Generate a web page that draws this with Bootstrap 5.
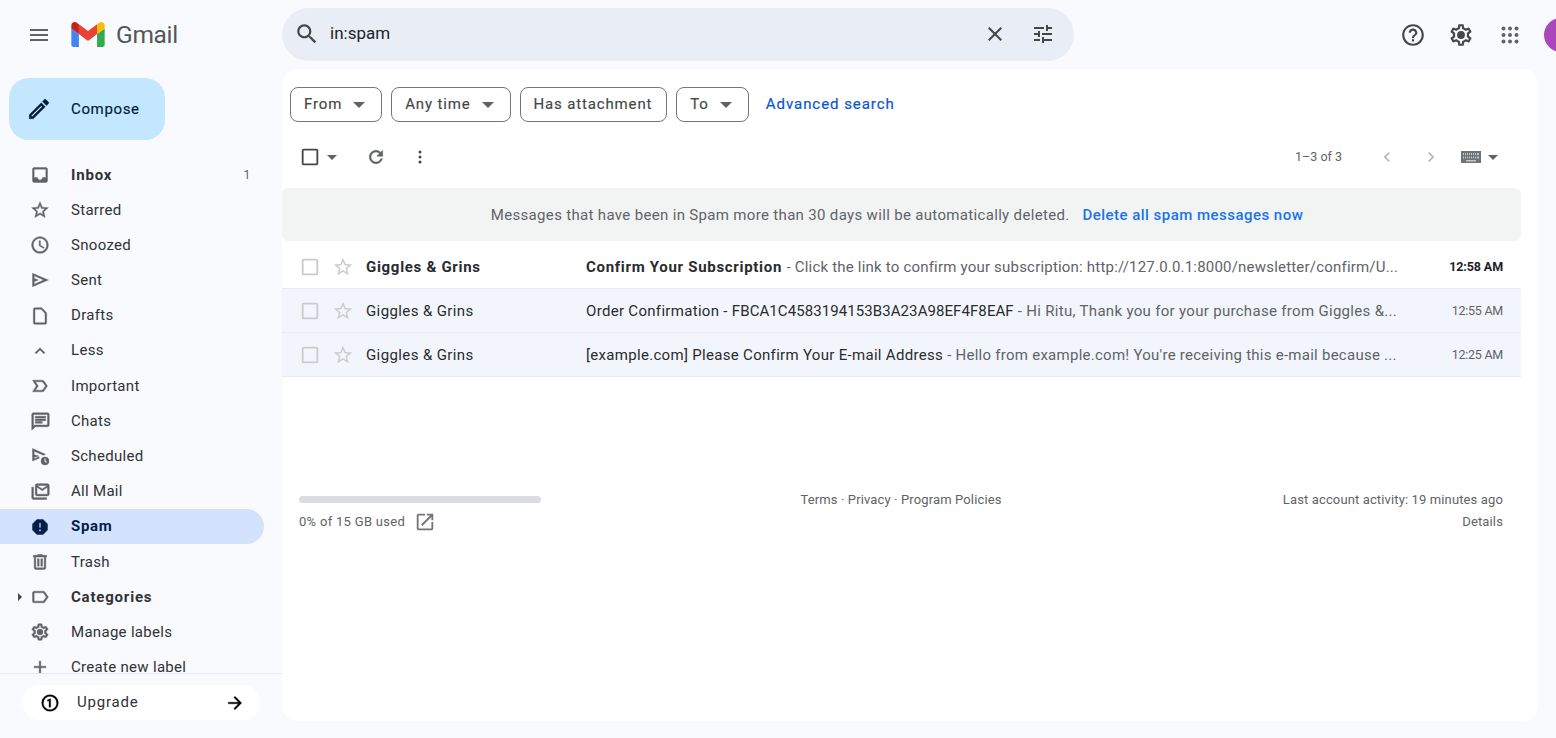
<!DOCTYPE html>
<html lang="en">
<head>
<meta charset="utf-8">
<title>Spam - Gmail</title>
<link href="https://cdn.jsdelivr.net/npm/bootstrap@5.3.0/dist/css/bootstrap.min.css" rel="stylesheet">
<style>
html,body{height:100%}
body{background:#f8fafd;font-family:Roboto,"Liberation Sans",sans-serif;color:#1f1f1f;overflow:hidden}
svg{display:block;flex-shrink:0;fill:currentColor}
.top-bar{height:69px;flex-shrink:0}
.brand-zone{width:282px;flex-shrink:0;padding-left:27px}
.ham{color:#5f6368;margin-right:20px}
.wordmark{font-size:24.5px;color:#54575a;margin-left:11px;line-height:1;letter-spacing:-.3px;padding-top:1px}
.search-pill{width:792px;height:53px;background:#e9eef6;border-radius:27px;margin-top:-1px;padding:0 19px 0 12px;color:#444746;flex-shrink:0}
.search-text{font-size:17px;margin-left:10px;color:#1f1f1f}
.head-icons{margin-left:326px;color:#444746;gap:22px;flex-shrink:0}
.apps-grid{margin-left:2px;color:#5f6368}
.head-avatar{width:34px;height:34px;border-radius:50%;background:#ab47bc;margin-left:22px;flex-shrink:0}
.side-col{width:282px;flex-shrink:0;min-height:0}
.compose-btn{width:156px;height:62px;margin:9px 0 0 9px;background:#c2e7ff;border-radius:20px;padding:0 0 0 17px;font-size:15px;color:#001d35;letter-spacing:.65px;border:0;flex-shrink:0;-webkit-text-stroke:.15px #001d35}
.compose-btn:hover{background:#c2e7ff;color:#001d35}
.compose-btn svg{stroke:currentColor;stroke-width:.3}
.compose-btn span{margin-left:19px}
.nav-scroll{overflow:hidden;margin-top:17.2px;flex:1 1 0;min-height:0}
.nav-line{height:35.2px;padding-left:30px;padding-right:13px;width:264px;font-size:15px;color:#303336;position:relative;border-radius:0 18px 18px 0;letter-spacing:.3px}
.nav-line svg{color:#5f6368;stroke:currentColor;stroke-width:.5}
.nav-line .nav-label{margin-left:21px}
.nav-line .nav-label-wide{margin-left:20px}
.nav-line .nav-count{margin-left:auto;font-size:12px;color:#5f6368}
.nav-bold{font-weight:700;letter-spacing:.8px}
.nav-active{background:#d3e3fd;color:#041e49;font-weight:700;letter-spacing:.7px}
.nav-active svg{color:#041e49}
.nav-caret{position:absolute;left:18px;top:14px;width:0;height:0;border-top:4px solid transparent;border-bottom:4px solid transparent;border-left:4px solid #444746}
.upgrade-zone{border-top:1px solid #e8eaed;height:65px;flex-shrink:0;padding:11px 22px 0}
.upgrade-pill{width:238px;height:35px;background:#fff;border-radius:18px;padding:0 15px 0 18px;font-size:15px;color:#303336;letter-spacing:.8px}
.upgrade-pill svg{color:#000;stroke:currentColor;stroke-width:.4}
.upgrade-pill .up-label{margin-left:17px}
.mail-panel{width:1256px;margin-bottom:17px;background:#fff;border-radius:16px;position:relative;min-height:0;overflow:hidden}
.filter-row{padding:18px 0 0 8px;gap:9px;height:53px}
.chip-btn{height:35px;border:1px solid #747775;border-radius:8px;padding:0 14px 0 13px;font-size:15px;color:#444746;background:#fff;letter-spacing:.85px;white-space:nowrap;-webkit-text-stroke:.15px #444746}
.chip-btn:hover{background:#fff;color:#444746;border-color:#747775}
.chip-open{padding-right:16px}
.chip-arrow{width:0;height:0;border-left:6px solid transparent;border-right:6px solid transparent;border-top:6px solid #5f6368;margin-left:11px}
.adv-link{color:#0b57d0;font-size:15px;margin-left:8px;text-decoration:none;letter-spacing:.95px;-webkit-text-stroke:.2px #0b57d0}
.tool-row{height:66px;padding:4px 23px 0 17px;width:1239px;color:#444746}
.tool-arrow{width:0;height:0;border-left:5px solid transparent;border-right:5px solid transparent;border-top:5px solid #5f6368}
.arrow-check{margin-left:6px}
.arrow-kbd{margin-left:7px}
.tool-refresh{margin-left:29px;color:#5f6368;stroke:currentColor;stroke-width:.6}
.tool-more{margin-left:24px}
.page-info{margin-left:auto;font-size:12.5px;color:#5f6368}
.pager-gray{color:#b5b8bb}
.pager-prev{margin-left:35px}
.pager-next{margin-left:24px}
.kbd-icon{margin-left:20px;color:#6f7377}
.spam-banner{width:1239px;height:53px;background:#f2f4f3;border-radius:6px;font-size:15px;color:#5f6368;letter-spacing:.33px;padding:1px 9px 0 0}
.spam-banner a{color:#1a73e8;text-decoration:none;font-weight:500;margin-left:13px;letter-spacing:.47px}
.mail-list{width:1239px;margin-top:4px}
.mail-line{height:44px;border-bottom:1px solid #e7ecf3;font-size:15px;color:#2a2b2d;padding:0 18px 0 17px;white-space:nowrap}
.mail-unread{background:#fff;font-weight:700}
.mail-read{background:#f2f6fc}
.chk-cell{color:#c9cccb}
.star-cell{color:#c9cccb;margin-left:11px;margin-right:12px}
.sender-cell{width:220px;flex-shrink:0;letter-spacing:.39px;padding-top:1px}
.mail-unread .sender-cell{letter-spacing:.7px}
.body-cell{width:818px;flex-shrink:0;letter-spacing:.31px;padding-top:1px}
.mail-unread .body-cell{letter-spacing:.7px}
.snip{color:#5f6368;font-weight:400}
.snip-a{letter-spacing:.2px}
.snip-b{letter-spacing:.31px}
.snip-c{letter-spacing:.26px}
.hex-run{letter-spacing:.08px}
.time-cell{margin-left:auto;font-size:12.5px;color:#5f6368;letter-spacing:-.25px;padding-top:1px}
.mail-unread .time-cell{color:#1f1f1f;letter-spacing:-.1px}
.foot-row{width:1239px;padding:112px 18px 0 17px;font-size:13px;color:#5f6368;line-height:22px;letter-spacing:.13px}
.foot-col{flex:1 1 0}
.use-bar{width:242px;height:7px;background:#dadce0;border-radius:4px;margin-top:7px;margin-bottom:8px}
.used-text{letter-spacing:.3px}
.used-link{margin-left:9px;color:#757575}
</style>
</head>
<body class="d-flex flex-column">
<svg width="0" height="0" class="position-absolute">
<symbol id="ic-gear" viewBox="0 0 24 24"><path d="M19.43 12.98c.04-.32.07-.64.07-.98 0-.34-.03-.66-.07-.98l2.11-1.65c.19-.15.24-.42.12-.64l-2-3.46c-.09-.16-.26-.25-.44-.25-.06 0-.12.01-.17.03l-2.49 1c-.52-.4-1.08-.73-1.69-.98l-.38-2.65C14.46 2.18 14.25 2 14 2h-4c-.25 0-.46.18-.49.42l-.38 2.65c-.61.25-1.17.59-1.69.98l-2.49-1c-.06-.02-.12-.03-.18-.03-.17 0-.34.09-.43.25l-2 3.46c-.13.22-.07.49.12.64l2.11 1.65c-.04.32-.07.65-.07.98 0 .33.03.66.07.98l-2.11 1.65c-.19.15-.24.42-.12.64l2 3.46c.09.16.26.25.44.25.06 0 .12-.01.17-.03l2.49-1c.52.4 1.08.73 1.69.98l.38 2.65c.03.24.24.42.49.42h4c.25 0 .46-.18.49-.42l.38-2.65c.61-.25 1.17-.59 1.69-.98l2.49 1c.06.02.12.03.18.03.17 0 .34-.09.43-.25l2-3.46c.12-.22.07-.49-.12-.64l-2.11-1.65zm-1.98-1.71c.04.31.05.52.05.73 0 .21-.02.43-.05.73l-.14 1.13.89.7 1.08.84-.7 1.21-1.27-.51-1.04-.42-.9.68c-.43.32-.84.56-1.25.73l-1.06.43-.16 1.13-.2 1.35h-1.4l-.19-1.35-.16-1.13-1.06-.43c-.43-.18-.83-.41-1.23-.71l-.91-.7-1.06.43-1.27.51-.7-1.21 1.08-.84.89-.7-.14-1.13c-.03-.31-.05-.54-.05-.74s.02-.43.05-.73l.14-1.13-.89-.7-1.08-.84.7-1.21 1.27.51 1.04.42.9-.68c.43-.32.84-.56 1.25-.73l1.06-.43.16-1.13.2-1.35h1.39l.19 1.35.16 1.13 1.06.43c.43.18.83.41 1.23.71l.91.7 1.06-.43 1.27-.51.7 1.21-1.07.85-.89.7.14 1.13z"/><circle cx="12" cy="12" r="3.6"/></symbol>
<symbol id="ic-box" viewBox="0 0 24 24"><path d="M19 5v14H5V5h14m0-2H5c-1.1 0-2 .9-2 2v14c0 1.1.9 2 2 2h14c1.1 0 2-.9 2-2V5c0-1.1-.9-2-2-2z"/></symbol>
<symbol id="ic-star" viewBox="0 0 24 24"><path d="M22 9.24l-7.19-.62L12 2 9.19 8.63 2 9.24l5.46 4.73L5.82 21 12 17.27 18.18 21l-1.63-7.03L22 9.24zM12 15.4l-3.76 2.27 1-4.28-3.32-2.88 4.38-.38L12 6.1l1.71 4.04 4.38.38-3.32 2.88 1 4.28L12 15.4z"/></symbol>
</svg>

<header class="top-bar d-flex align-items-center">
  <div class="brand-zone d-flex align-items-center">
    <svg class="ham" width="24" height="24" viewBox="0 0 24 24"><path d="M3 18h18v-2H3v2zm0-5h18v-2H3v2zm0-7v2h18V6H3z"/></svg>
    <svg width="34" height="25" viewBox="52 42 88 66"><path fill="#4285f4" d="M58 108h14V74L52 59v43c0 3.32 2.69 6 6 6"/><path fill="#34a853" d="M120 108h14c3.32 0 6-2.69 6-6V59l-20 15"/><path fill="#fbbc04" d="M120 48v26l20-15v-8c0-7.42-8.47-11.65-14.4-7.2"/><path fill="#ea4335" d="M72 74V48l24 18 24-18v26L96 92"/><path fill="#c5221f" d="M52 51v8l20 15V48l-5.6-4.2c-5.94-4.45-14.4-.22-14.4 7.2"/></svg>
    <span class="wordmark">Gmail</span>
  </div>
  <div class="search-pill d-flex align-items-center">
    <svg width="26" height="26" viewBox="0 0 24 24"><path d="M15.5 14h-.79l-.28-.27C15.41 12.59 16 11.11 16 9.5 16 5.91 13.09 3 9.5 3S3 5.91 3 9.5 5.91 16 9.500 16c1.61 0 3.09-.59 4.23-1.57l.27.28v.79l5 4.99L20.49 19l-4.99-5zm-6 0C7.01 14 5 11.99 5 9.5S7.01 5 9.5 5 14 7.01 14 9.5 11.99 14 9.5 14z"/></svg>
    <span class="search-text">in:spam</span>
    <svg class="ms-auto" width="24" height="24" viewBox="0 0 24 24"><path d="M19 6.41L17.59 5 12 10.59 6.41 5 5 6.41 10.59 12 5 17.59 6.41 19 12 13.41 17.59 19 19 17.59 13.41 12z"/></svg>
    <svg class="ms-4" width="24" height="24" viewBox="0 0 24 24"><path d="M3 17v2h6v-2H3zM3 5v2h10V5H3zm10 16v-2h8v-2h-8v-2h-2v6h2zM7 9v2H3v2h4v2h2V9H7zm14 4v-2H11v2h10zm-6-4h2V7h4V5h-4V3h-2v6z"/></svg>
  </div>
  <div class="head-icons d-flex align-items-center">
    <svg width="26" height="26" viewBox="0 0 24 24"><path d="M11 18h2v-2h-2v2zm1-16C6.48 2 2 6.48 2 12s4.48 10 10 10 10-4.48 10-10S17.52 2 12 2zm0 18c-4.41 0-8-3.59-8-8s3.59-8 8-8 8 3.59 8 8-3.59 8-8 8zm0-14c-2.21 0-4 1.79-4 4h2c0-1.1.9-2 2-2s2 .9 2 2c0 2-3 1.75-3 5h2c0-2.25 3-2.5 3-5 0-2.21-1.79-4-4-4z"/></svg>
    <svg width="26" height="26"><use href="#ic-gear"/></svg>
    <svg class="apps-grid" width="24" height="24" viewBox="0 0 24 24"><circle cx="5.500" cy="5.500" r="2"/><circle cx="12" cy="5.500" r="2"/><circle cx="18.500" cy="5.500" r="2"/><circle cx="5.500" cy="12" r="2"/><circle cx="12" cy="12" r="2"/><circle cx="18.500" cy="12" r="2"/><circle cx="5.500" cy="18.500" r="2"/><circle cx="12" cy="18.500" r="2"/><circle cx="18.500" cy="18.500" r="2"/></svg>
  </div>
  <div class="head-avatar"></div>
</header>

<div class="d-flex flex-grow-1" style="min-height:0">
  <aside class="side-col d-flex flex-column">
    <button class="btn compose-btn d-flex align-items-center" type="button">
      <svg width="26" height="26" viewBox="0 0 24 24"><path d="M14.060 9.020l.92.92L5.920 19H5v-.92l9.060-9.060M17.660 3c-.25 0-.51.1-.7.29l-1.830 1.830 3.750 3.750 1.830-1.830c.39-.39.39-1.020 0-1.410l-2.340-2.340c-.2-.2-.45-.29-.71-.29zm-3.600 3.190L3 17.250V21h3.750L17.810 9.940l-3.750-3.750z"/></svg>
      <span>Compose</span>
    </button>
    <nav class="nav-scroll">
      <div class="nav-line d-flex align-items-center nav-bold"><svg width="20" height="20" viewBox="0 0 24 24"><path d="M19 3H4.990C3.890 3 3 3.900 3 5l.01 14c0 1.100.89 2 1.990 2h14c1.100 0 2-.9 2-2V5c0-1.100-.9-2-2-2zm0 12h-4c0 1.660-1.350 3-3 3s-3-1.340-3-3H4.990V5H19v10z"/></svg><span class="nav-label">Inbox</span><span class="nav-count fw-normal">1</span></div>
      <div class="nav-line d-flex align-items-center"><svg width="20" height="20"><use href="#ic-star"/></svg><span class="nav-label">Starred</span></div>
      <div class="nav-line d-flex align-items-center"><svg width="20" height="20" viewBox="0 0 24 24"><path d="M11.990 2C6.470 2 2 6.480 2 12s4.470 10 9.990 10C17.520 22 22 17.520 22 12S17.520 2 11.990 2zM12 20c-4.420 0-8-3.580-8-8s3.580-8 8-8 8 3.580 8 8-3.580 8-8 8zm.5-13H11v6l5.250 3.150.75-1.230-4.500-2.670z"/></svg><span class="nav-label">Snoozed</span></div>
      <div class="nav-line d-flex align-items-center"><svg width="20" height="20" viewBox="0 0 24 24"><path d="M3 4v16l19-8L3 4zm2 3l11.500 5L5 17v-3l5-2-5-2V7z"/></svg><span class="nav-label">Sent</span></div>
      <div class="nav-line d-flex align-items-center"><svg width="20" height="20" viewBox="0 0 24 24"><path d="M6 2c-1.100 0-2 .9-2 2v16c0 1.100.9 2 2 2h12c1.100 0 2-.9 2-2V8l-6-6H6zm0 2h7.170L18 8.830V20H6V4z"/></svg><span class="nav-label">Drafts</span></div>
      <div class="nav-line d-flex align-items-center"><svg width="20" height="20" viewBox="0 0 24 24"><path d="M12 8l-6 6 1.410 1.410L12 10.830l4.590 4.580L18 14z"/></svg><span class="nav-label">Less</span></div>
      <div class="nav-line d-flex align-items-center"><svg width="20" height="20" viewBox="0 0 24 24"><path d="M15 19H3l4.500-7L3 5h12c.65 0 1.260.31 1.630.84L21 12l-4.370 6.160c-.37.53-.98.84-1.630.84zm-8.500-2H15l3.500-5L15 7H6.500l3.500 5-3.500 5z"/></svg><span class="nav-label">Important</span></div>
      <div class="nav-line d-flex align-items-center"><svg width="21" height="21" viewBox="0 0 24 24"><path d="M20 2H4c-1.100 0-2 .9-2 2v18l4-4h14c1.100 0 2-.9 2-2V4c0-1.100-.9-2-2-2zm0 14H5.170L4 17.170V4h16v12zM6 12h8v2H6zm0-3h12v2H6zm0-3h12v2H6z"/></svg><span class="nav-label nav-label-wide">Chats</span></div>
      <div class="nav-line d-flex align-items-center"><svg width="20" height="20" viewBox="0 0 24 24"><path d="M3 3v15l8-3.400V13L5 15.200V13.500l5.500-1.500L5 10.500V6.200l11 4.800 2.500-1.100L3 3z"/><circle cx="18" cy="18" r="4.800"/><path fill="#f8fafd" stroke="none" d="M17.400 15h1.200v3l1.800 1.100-.6.9-2.400-1.400z"/></svg><span class="nav-label">Scheduled</span></div>
      <div class="nav-line d-flex align-items-center"><svg width="21" height="21" viewBox="0 0 24 24"><path d="M20 3H8c-1.100 0-2 .9-2 2v10c0 1.100.9 2 2 2h12c1.100 0 2-.9 2-2V5c0-1.100-.9-2-2-2zm0 12H8V7l6 4 6-4v8zm-6-6L8 5h12l-6 4zM4 7H2v12c0 1.100.9 2 2 2h15v-2H4V7z"/></svg><span class="nav-label nav-label-wide">All Mail</span></div>
      <div class="nav-line d-flex align-items-center nav-active"><svg width="20" height="20" viewBox="0 0 24 24"><path d="M15.730 3H8.270L3 8.270v7.460L8.270 21h7.460L21 15.730V8.270L15.730 3zM12 17.300c-.72 0-1.300-.58-1.300-1.300 0-.72.58-1.300 1.300-1.300.72 0 1.300.58 1.300 1.300 0 .72-.58 1.300-1.300 1.300zm1-4.300h-2V7h2v6z"/></svg><span class="nav-label">Spam</span></div>
      <div class="nav-line d-flex align-items-center"><svg width="20" height="20" viewBox="0 0 24 24"><path d="M15 4V3H9v1H4v2h1v13c0 1.100.9 2 2 2h10c1.100 0 2-.9 2-2V6h1V4h-5zm2 15H7V6h10v13zM9 8h2v9H9zm4 0h2v9h-2z"/></svg><span class="nav-label">Trash</span></div>
      <div class="nav-line d-flex align-items-center nav-bold"><i class="nav-caret"></i><svg width="20" height="20" viewBox="0 0 24 24"><path d="M17.630 5.840C17.270 5.330 16.670 5 16 5L5 5.010C3.900 5.010 3 5.900 3 7v10c0 1.100.9 1.990 2 1.990L16 19c.67 0 1.270-.33 1.630-.84L22 12l-4.370-6.160zM16 17H5V7h11l3.550 5L16 17z"/></svg><span class="nav-label">Categories</span></div>
      <div class="nav-line d-flex align-items-center"><svg width="20" height="20"><use href="#ic-gear"/></svg><span class="nav-label">Manage labels</span></div>
      <div class="nav-line d-flex align-items-center"><svg width="20" height="20" viewBox="0 0 24 24"><path d="M19 13h-6v6h-2v-6H5v-2h6V5h2v6h6v2z"/></svg><span class="nav-label">Create new label</span></div>
    </nav>
    <div class="upgrade-zone">
      <div class="upgrade-pill d-flex align-items-center">
        <svg width="20" height="20" viewBox="0 0 24 24"><path d="M12 2a10 10 0 1 0 0 20 10 10 0 0 0 0-20zm0 18a8 8 0 1 1 0-16 8 8 0 0 1 0 16z"/><path d="M12.800 7v10h-2V9.300L9 10V8.200L12.500 7z"/></svg>
        <span class="up-label">Upgrade</span>
        <svg class="ms-auto" width="20" height="20" viewBox="0 0 24 24"><path d="M12 4l-1.410 1.410L16.170 11H4v2h12.170l-5.580 5.590L12 20l8-8z"/></svg>
      </div>
    </div>
  </aside>

  <main class="mail-panel">
    <div class="filter-row d-flex align-items-center">
      <button class="btn chip-btn chip-open d-flex align-items-center" type="button">From<i class="chip-arrow"></i></button>
      <button class="btn chip-btn chip-open d-flex align-items-center" type="button">Any time<i class="chip-arrow"></i></button>
      <button class="btn chip-btn d-flex align-items-center" type="button">Has attachment</button>
      <button class="btn chip-btn chip-open d-flex align-items-center" type="button">To<i class="chip-arrow"></i></button>
      <a class="adv-link" href="#">Advanced search</a>
    </div>
    <div class="tool-row d-flex align-items-center">
      <svg width="22" height="22"><use href="#ic-box"/></svg>
      <i class="tool-arrow arrow-check"></i>
      <svg class="tool-refresh" width="20" height="20" viewBox="0 0 24 24"><path d="M17.650 6.350C16.200 4.900 14.210 4 12 4c-4.420 0-7.990 3.580-7.990 8s3.570 8 7.990 8c3.730 0 6.840-2.550 7.730-6h-2.080c-.82 2.330-3.040 4-5.650 4-3.310 0-6-2.690-6-6s2.690-6 6-6c1.660 0 3.140.69 4.220 1.780L13 11h7V4l-2.350 2.350z"/></svg>
      <svg class="tool-more" width="20" height="20" viewBox="0 0 24 24"><circle cx="12" cy="6" r="1.800"/><circle cx="12" cy="12" r="1.800"/><circle cx="12" cy="18" r="1.800"/></svg>
      <span class="page-info">1–3 of 3</span>
      <svg class="pager-gray pager-prev" width="20" height="20" viewBox="0 0 24 24"><path d="M15.410 7.410L14 6l-6 6 6 6 1.410-1.410L10.830 12z"/></svg>
      <svg class="pager-gray pager-next" width="20" height="20" viewBox="0 0 24 24"><path d="M10 6L8.590 7.410 13.170 12l-4.580 4.590L10 18l6-6z"/></svg>
      <svg class="kbd-icon" width="20" height="14" viewBox="0 0 20 14"><path d="M0 1h20v12H0z"/><path fill="#c4c7c5" d="M2 3h1v2H2zm2 0h1v2H4zm2 0h1v2H6zm2 0h1v2H8zm2 0h1v2h-1zm2 0h1v2h-1zm2 0h1v2h-1zm2 0h2v2h-2zM2 6.500h1v2H2zm2 0h1v2H4zm2 0h1v2H6zm2 0h1v2H8zm2 0h1v2h-1zm2 0h1v2h-1zm2 0h1v2h-1zm2 0h2v2h-2zM5 10h10v1.500H5z"/></svg>
      <i class="tool-arrow arrow-kbd"></i>
    </div>
    <div class="spam-banner d-flex align-items-center justify-content-center">Messages that have been in Spam more than 30 days will be automatically deleted.<a href="#">Delete all spam messages now</a></div>
    <div class="mail-list">
      <div class="mail-line mail-unread d-flex align-items-center">
        <svg class="chk-cell" width="22" height="22"><use href="#ic-box"/></svg>
        <svg class="star-cell" width="22" height="22"><use href="#ic-star"/></svg>
        <span class="sender-cell">Giggles &amp; Grins</span>
        <span class="body-cell">Confirm Your Subscription <span class="snip snip-a">- Click the link to confirm your subscription: http://127.0.0.1:8000/newsletter/confirm/U...</span></span>
        <span class="time-cell">12:58 AM</span>
      </div>
      <div class="mail-line mail-read d-flex align-items-center">
        <svg class="chk-cell" width="22" height="22"><use href="#ic-box"/></svg>
        <svg class="star-cell" width="22" height="22"><use href="#ic-star"/></svg>
        <span class="sender-cell">Giggles &amp; Grins</span>
        <span class="body-cell">Order Confirmation - <span class="hex-run">FBCA1C4583194153B3A23A98EF4F8EAF</span> <span class="snip snip-b">- Hi Ritu, Thank you for your purchase from Giggles &amp;...</span></span>
        <span class="time-cell">12:55 AM</span>
      </div>
      <div class="mail-line mail-read d-flex align-items-center">
        <svg class="chk-cell" width="22" height="22"><use href="#ic-box"/></svg>
        <svg class="star-cell" width="22" height="22"><use href="#ic-star"/></svg>
        <span class="sender-cell">Giggles &amp; Grins</span>
        <span class="body-cell">[example.com] Please Confirm Your E-mail Address <span class="snip snip-c">- Hello from example.com! You're receiving this e-mail because ...</span></span>
        <span class="time-cell">12:25 AM</span>
      </div>
    </div>
    <div class="foot-row d-flex">
      <div class="foot-col">
        <div class="use-bar"></div>
        <div class="d-flex align-items-center"><span class="used-text">0% of 15 GB used</span><svg class="used-link" width="22" height="22" viewBox="0 0 24 24"><path d="M19 19H5V5h7V3H5c-1.110 0-2 .9-2 2v14c0 1.100.89 2 2 2h14c1.100 0 2-.9 2-2v-7h-2v7zM14 3v2h3.590l-9.830 9.830 1.410 1.410L19 6.410V10h2V3h-7z"/></svg></div>
      </div>
      <div class="foot-col text-center">Terms · Privacy · Program Policies</div>
      <div class="foot-col text-end">Last account activity: 19 minutes ago<br>Details</div>
    </div>
  </main>
</div>
<script src="https://cdn.jsdelivr.net/npm/bootstrap@5.3.0/dist/js/bootstrap.bundle.min.js"></script>
</body>
</html>
